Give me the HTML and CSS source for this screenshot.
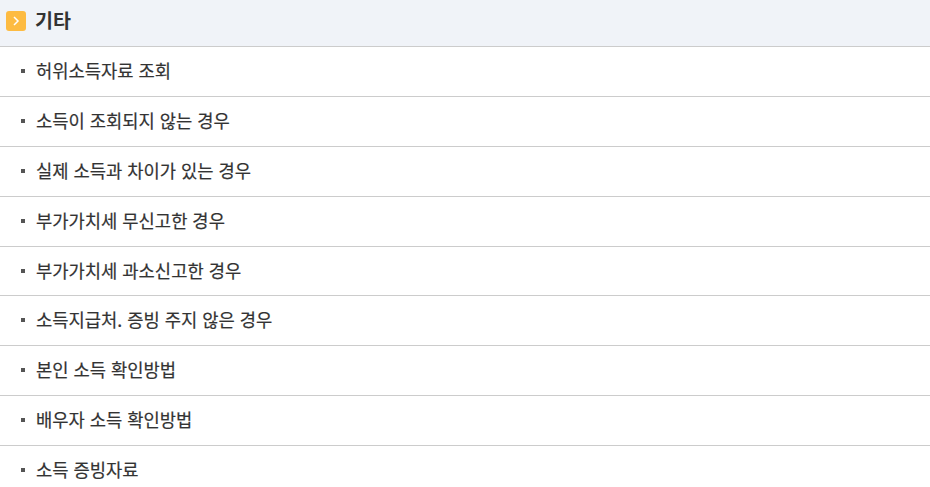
FILE: index.html
```html
<!DOCTYPE html>
<html lang="ko">
<head>
<meta charset="utf-8">
<title>기타</title>
<link rel="stylesheet" href="styles.css">
</head>
<body>
<h2 class="head">
<svg class="chev" width="20" height="20" viewBox="0 0 20 20"><rect width="20" height="20" rx="3" fill="#fdbb42"/><path d="M8 6l4 4-4 4" fill="none" stroke="#fff" stroke-width="1.5"/></svg>
<span class="head-text">기타</span></h2>
<ul class="list">
<li>허위소득자료 조회</li>
<li>소득이 조회되지 않는 경우</li>
<li>실제 소득과 차이가 있는 경우</li>
<li>부가가치세 무신고한 경우</li>
<li>부가가치세 과소신고한 경우</li>
<li>소득지급처. 증빙 주지 않은 경우</li>
<li>본인 소득 확인방법</li>
<li>배우자 소득 확인방법</li>
<li>소득 증빙자료</li>
</ul>
</body>
</html>
```
FILE: styles.css
```css
html, body { margin: 0; padding: 0; background: #fff; overflow: hidden; }
body { font-family: "Noto Sans CJK KR", "Noto Sans", sans-serif; color: #333; }
.head { display: flex; align-items: flex-start; gap: 9px; margin: 0; padding: 11px 0 0 6px; height: 35.4px; background: #f0f3f8; border-bottom: 1px solid #ccc; font-size: 19.5px; font-weight: 700; line-height: 18px; }
.head-text { display: block; }
.list { list-style: none; margin: 0; padding: 0; }
.list li { position: relative; height: 48.8px; line-height: 46.5px; padding-left: 36px; border-bottom: 1px solid #ccc; font-size: 17.7px; font-weight: 400; -webkit-text-stroke: 0.2px #333; }
.list li::before { content: ""; position: absolute; left: 21px; top: 22px; width: 4px; height: 4px; background: #555; }
.list li:last-child { border-bottom: 0; }
```
